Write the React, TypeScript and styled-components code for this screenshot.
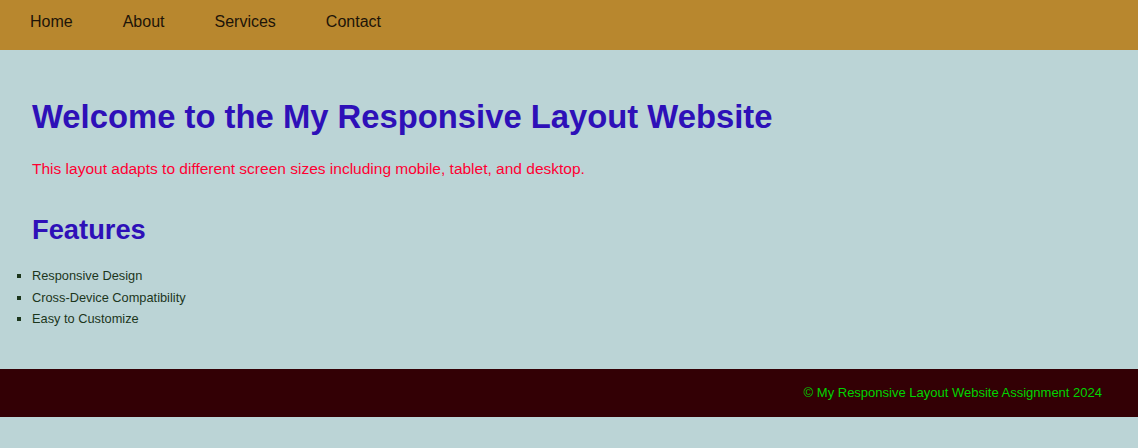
import React from "react";
import styled, { createGlobalStyle } from "styled-components";

const links = ["Home", "About", "Services", "Contact"];
const features = [
  "Responsive Design",
  "Cross-Device Compatibility",
  "Easy to Customize",
];

const App = () => {
  return (
    <>
      <GlobalStyle />
      <Header>
        <Nav>
          {links.map((link) => (
            <NavLink key={link} href="#">
              {link}
            </NavLink>
          ))}
        </Nav>
      </Header>

      <Main>
        <Title>Welcome to the My Responsive Layout Website</Title>
        <Lead>
          This layout adapts to different screen sizes including mobile,
          tablet, and desktop.
        </Lead>

        <SubTitle>Features</SubTitle>
        <FeatureList>
          {features.map((item) => (
            <Feature key={item}>{item}</Feature>
          ))}
        </FeatureList>
      </Main>

      <Footer>© My Responsive Layout Website Assignment 2024</Footer>
    </>
  );
};

/**
 * styles
 */

const GlobalStyle = createGlobalStyle`
  html, body {
    margin: 0;
    padding: 0;
    background-color: #bbd4d6;
    font-family: "Liberation Sans", Arial, sans-serif;
  }
`;

const Header = styled.header`
  height: 50px;
  box-sizing: border-box;
  padding: 13px 30px 0;
  background-color: #b8872e;
`;

const Nav = styled.nav`
  gap: 50px;
  display: flex;
  align-items: flex-start;
`;

const NavLink = styled.a`
  color: #1d1408;
  font-size: 16px;
  line-height: 18px;
  text-decoration: none;
`;

const Main = styled.main`
  padding: 48px 32px 36px;
`;

const Title = styled.h1`
  margin: 0 0 25px;
  color: #2e10b8;
  font-size: 32.8px;
  font-weight: 700;
  line-height: 37px;
`;

const Lead = styled.p`
  margin: 0 0 36px;
  color: #ff0033;
  font-size: 15.5px;
  line-height: 18px;
`;

const SubTitle = styled.h2`
  margin: 0 0 22px;
  color: #2e10b8;
  font-size: 27.3px;
  font-weight: 700;
  line-height: 32px;
`;

const FeatureList = styled.ul`
  margin: 0;
  padding: 0;
  list-style: square;
`;

const Feature = styled.li`
  color: #1c361c;
  font-size: 12.8px;
  line-height: 15px;
  margin-bottom: 6.5px;
`;

const Footer = styled.footer`
  height: 48px;
  display: flex;
  align-items: center;
  justify-content: flex-end;
  box-sizing: border-box;
  padding: 0 36px;
  color: #00d400;
  font-size: 13px;
  background-color: #330005;
`;

export default App;
